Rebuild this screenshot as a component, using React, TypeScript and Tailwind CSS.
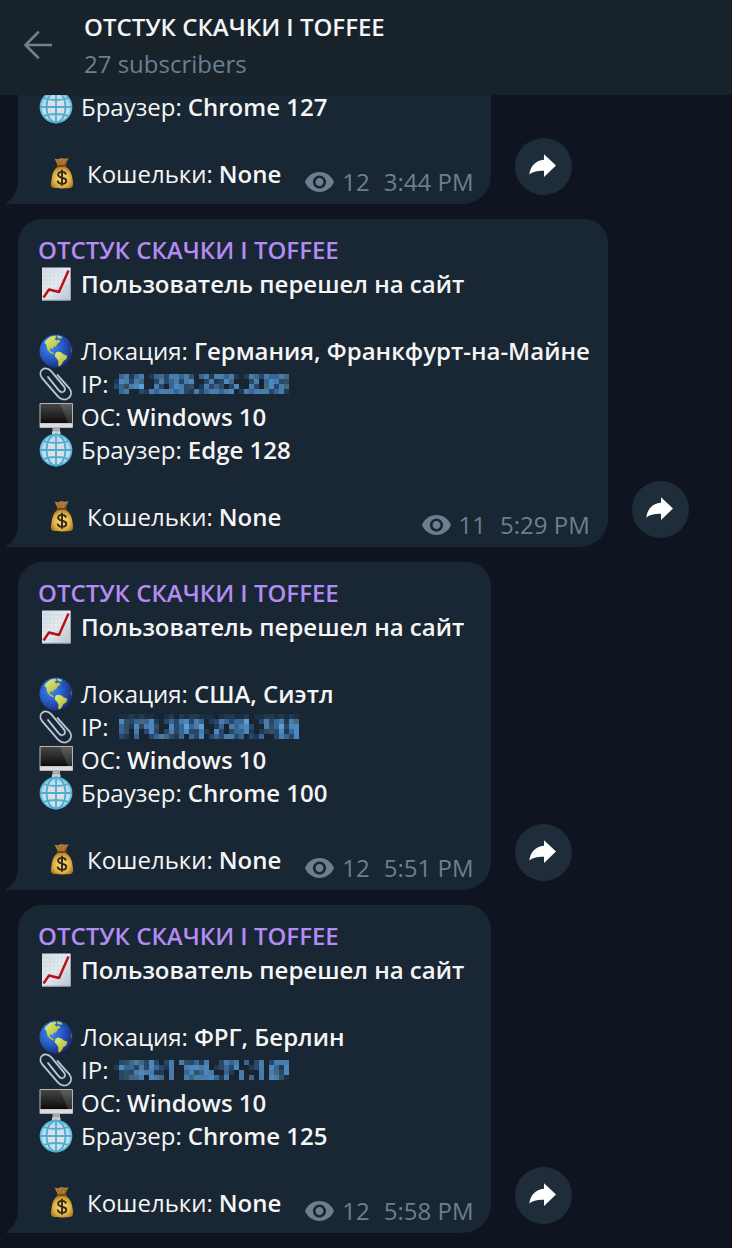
import type { ReactNode } from 'react';

type Message = {
  id: number;
  location?: string;
  ip?: string[];
  browser: string;
  views: number;
  time: string;
};

const CHANNEL = 'ОТСТУК СКАЧКИ I TOFFEE';

// one letter per 5px block
const BLOCKS: Record<string, string> = {
  k: '#182432',
  n: '#1d2e40',
  a: '#203a56',
  b: '#28476a',
  g: '#345060',
  h: '#44697f',
  c: '#386694',
  d: '#4a7ca8',
  e: '#4c88bd',
  f: '#5c9fd8',
};

const messages: Message[] = [
  { id: 1, browser: 'Chrome 127', views: 12, time: '3:44 PM' },
  {
    id: 2,
    location: 'Германия, Франкфурт-на-Майне',
    ip: [
      '.cdacd.achbddcdg.cdaddcda.adhbdccdh',
      'aedbdh.kbdbcdbde.kbdabehk.kbdkcedbg',
      'bcgdef.kdbkcedbg.adbcgkbe.kdbkhebdh',
      '.cd.kbadcdddcdbadbcddcdekadcdddbcda',
    ],
    browser: 'Edge 128',
    views: 11,
    time: '5:29 PM',
  },
  {
    id: 3,
    location: 'США, Сиэтл',
    ip: [
      '.nnanann.knakanaannnknaannaknnaananan',
      '.egbchceakbcbdebdckabdcbccfk.bdbcdadh',
      '.cgaebdegkkebcfcdfkkackdcdebkkdgcfbee',
      '.cgkdkbebkbdbcebbdakebkbcceakabgbeace',
      '.bakckkbcdhbackcbekbcbddbckbackkbdcbe',
    ],
    browser: 'Chrome 100',
    views: 12,
    time: '5:51 PM',
  },
  {
    id: 4,
    location: 'ФРГ, Берлин',
    ip: [
      '.bghdhbebkbdkdgbcadk.bdcdkc.bd.bddd',
      'aeccbdbecbadk.deedekabcbek.abdkecae',
      '.bgbdeddaakdkkcdgcedkkcakdkkkdkdhbe',
      '.bgchdkedhkdkkdcdddecadkkdkhkdkedgn',
    ],
    browser: 'Chrome 125',
    views: 12,
    time: '5:58 PM',
  },
];

function ChartIcon() {
  return (
    <svg viewBox="0 0 36 36" className="size-9 shrink-0" aria-hidden="true">
      <defs>
        <linearGradient id="paper" x1="0" y1="0" x2="1" y2="1">
          <stop offset="0" stopColor="#d3dde5" />
          <stop offset="0.5" stopColor="#e6ecf1" />
          <stop offset="1" stopColor="#b9c5cf" />
        </linearGradient>
      </defs>
      <rect x="4" y="1.5" width="28.5" height="33" fill="url(#paper)" />
      <path
        d="M8 2v32M12 2v32M16 2v32M20 2v32M24 2v32M28 2v32M4 6h28M4 10h28M4 14h28M4 18h28M4 22h28M4 26h28M4 30h28"
        stroke="#b4c6d4"
        strokeWidth="0.5"
        opacity="0.5"
      />
      <path d="M4 34h28.500V2" fill="none" stroke="#9eabb6" strokeWidth="0.8" />
      <path d="M5.500 31.500 11 23.500 21 26 30.500 4.500" fill="none" stroke="#b80f17" strokeWidth="2.400" strokeLinejoin="round" />
    </svg>
  );
}

function EarthIcon() {
  return (
    <svg viewBox="0 0 36 36" className="size-9 shrink-0" aria-hidden="true">
      <defs>
        <radialGradient id="ocean" cx="0.35" cy="0.38" r="0.68">
          <stop offset="0" stopColor="#3f8af0" />
          <stop offset="0.55" stopColor="#2559c4" />
          <stop offset="1" stopColor="#1b2a75" />
        </radialGradient>
        <linearGradient id="land" x1="0" y1="0" x2="1" y2="1">
          <stop offset="0" stopColor="#e3ec78" />
          <stop offset="0.45" stopColor="#c6d556" />
          <stop offset="1" stopColor="#c79a2c" />
        </linearGradient>
      </defs>
      <circle cx="18" cy="18" r="16.5" fill="url(#ocean)" />
      <path
        d="M7.500 7.500 12 3.800l5-1.200 1.500 1.600-2 1.800 2.200 1.400 1.800-1 2.200 1.800-3 2.300-1.700 2.800-2.500.8-.8 2.200-1.900-1.200-1.300 1.300 1.200 2.200 2.300.9 1.600 2-1.800-.3-3.300-2-2.300-3.200-.8-4-1.800-2.200z"
        fill="url(#land)"
      />
      <path d="m19 2.200 4.500 1.200.8 2-3 .1-2.200-1.300z" fill="#a9d070" />
      <path
        d="m17.500 19.800 2.500-1.300 3.500 1 2 1.800 3.800 1.500-.8 3.200-3.200 2.200-1.500 3-2.300 2.200-1.300-1 .2-4.200-1.700-2.700-2-2.300z"
        fill="url(#land)"
      />
      <path d="m33 14 1.200 2.500-.3 3.500-1.500-2.500z" fill="#56663f" />
      <path d="M6.500 10.500q3-5.500 8.500-7" fill="none" stroke="#9be0e8" strokeWidth="1" opacity="0.6" />
    </svg>
  );
}

function ClipIcon() {
  const wire =
    'M10 11 20.500 24C24 28.500 29 25 26 20.500L13.500 5.500C7-1.500-1 5 4 12L20 30.500C27 38 37 30 31.500 22.500L19.500 9';
  return (
    <svg viewBox="0 0 36 36" className="size-9 shrink-0" aria-hidden="true">
      <g fill="none" strokeLinecap="round" strokeLinejoin="round">
        <path d={wire} stroke="#5f7088" strokeWidth="2.3" />
        <path d={wire} stroke="#c8d3e2" strokeWidth="1.2" />
      </g>
    </svg>
  );
}

function MonitorIcon() {
  return (
    <svg viewBox="0 0 36 36" className="size-9 shrink-0" aria-hidden="true">
      <defs>
        <linearGradient id="screen" x1="0" y1="0" x2="0" y2="1">
          <stop offset="0" stopColor="#464646" />
          <stop offset="1" stopColor="#0c0c0c" />
        </linearGradient>
      </defs>
      <path d="M14.500 28h7.500v6h-7.500z" fill="#a9a9ab" />
      <path d="M14 32.500h8.500V35H14z" fill="#d2d2d4" />
      <rect x="1.500" y="4" width="33.500" height="25" rx="1" fill="#b5b5b7" />
      <rect x="2.500" y="5" width="31.500" height="19" fill="url(#screen)" />
      <path d="M22 5h12v19h-4z" fill="#fff" opacity="0.13" />
      <path d="M2 24.500h32.500V28H2z" fill="#dcdcde" />
    </svg>
  );
}

function GlobeIcon() {
  return (
    <svg viewBox="0 0 36 36" className="size-9 shrink-0" aria-hidden="true">
      <defs>
        <radialGradient id="globe" cx="0.5" cy="0.55" r="0.55">
          <stop offset="0" stopColor="#e6e4e2" />
          <stop offset="0.7" stopColor="#cfdde4" />
          <stop offset="1" stopColor="#7fcbe6" />
        </radialGradient>
      </defs>
      <circle cx="18" cy="18" r="15.5" fill="url(#globe)" stroke="#5cbce0" strokeWidth="1.700" />
      <g fill="none" stroke="#4fadd4" strokeWidth="1.800">
        <path d="M18 2v32M2 18h32" />
        <ellipse cx="18" cy="18" rx="9.5" ry="15.5" />
        <path d="M5 9q13 4 26 0M5 27q13-4 26 0" />
      </g>
    </svg>
  );
}

function MoneyBagIcon() {
  return (
    <svg viewBox="0 0 36 36" className="size-9 shrink-0" aria-hidden="true">
      <defs>
        <radialGradient id="bag" cx="0.5" cy="0.55" r="0.6">
          <stop offset="0" stopColor="#f8de7c" />
          <stop offset="0.6" stopColor="#e2b445" />
          <stop offset="1" stopColor="#a36d1b" />
        </radialGradient>
      </defs>
      <path d="M10.500 2.500q3.500 1.500 7-.5 4 1.500 7 0L20.800 10h-6.600z" fill="#b5813a" />
      <path d="m14 4 2.500 5.500M18 3.500v6M22 4l-2 5.500" stroke="#7e5420" strokeWidth="0.8" />
      <path
        d="M14.500 10.500h6.500c4.500 2 7 7 7.500 12.500.4 3 1.500 6-.5 8.200-1.500 1.600-18 1.600-20 0-2-2-.8-5.200-.4-8.200.5-5.500 2.400-10.500 6.900-12.500z"
        fill="url(#bag)"
      />
      <path d="M13.500 10h8.500" stroke="#7a4716" strokeWidth="1.800" strokeLinecap="round" />
      <path
        d="M22 18.500c-.5-1.800-2-2.600-4-2.600-2.300 0-3.900 1.100-3.900 2.900 0 4 8.200 1.900 8.200 5.900 0 1.900-1.700 3-4.200 3s-4.200-1.100-4.500-3.100M18 13.700v16"
        fill="none"
        stroke="#33291c"
        strokeWidth="1.900"
      />
    </svg>
  );
}

function EyeIcon() {
  return (
    <svg viewBox="1 4.5 22 15" className="h-5 w-[29px] shrink-0" fill="currentColor" aria-hidden="true">
      <path d="M12 4.500C7 4.500 2.730 7.610 1 12c1.730 4.390 6 7.500 11 7.500s9.270-3.110 11-7.500c-1.730-4.390-6-7.500-11-7.500zM12 17c-2.760 0-5-2.240-5-5s2.240-5 5-5 5 2.240 5 5-2.240 5-5 5zm0-8c-1.660 0-3 1.340-3 3s1.340 3 3 3 3-1.340 3-3-1.340-3-3-3z" />
    </svg>
  );
}

function Mosaic({ rows }: { rows: string[] }) {
  const width = Math.max(...rows.map((row) => row.length)) * 5;
  const height = rows.length * 5;
  return (
    <svg width={width} height={height} shapeRendering="crispEdges" className="shrink-0" role="img" aria-label="IP">
      {rows.map((row, y) =>
        [...row].map((block, x) =>
          BLOCKS[block] ? <rect key={`${x}-${y}`} x={x * 5} y={y * 5} width="5" height="5" fill={BLOCKS[block]} /> : null,
        ),
      )}
    </svg>
  );
}

function Row({ icon, label, children }: { icon: ReactNode; label?: string; children: ReactNode }) {
  return (
    <div className="flex h-[33px] items-center gap-[7px] whitespace-nowrap">
      {icon}
      <div className="flex items-center gap-1.5">
        {label && <span>{label}</span>}
        {children}
      </div>
    </div>
  );
}

function MessageItem({ message }: { message: Message }) {
  const { location, ip, browser, views, time } = message;
  return (
    <li className="flex items-end gap-6">
      <article
        className={`relative rounded-br-[28px] bg-[#192633] pr-[18px] pb-3.5 pl-5 ${
          location ? 'rounded-t-[24px] pt-3.5' : ''
        }`}
      >
        <svg viewBox="0 0 12 24" className="absolute right-full bottom-0 h-6 w-3" fill="#192633" aria-hidden="true">
          <path d="M12 0v24H1c-1.200 0-1.300-1-.4-1.500C7 18.500 12 12 12 0z" />
        </svg>
        {location && (
          <>
            <h2 className="h-[34px] leading-[34px] font-semibold text-[#b48bf2]">{CHANNEL}</h2>
            <Row icon={<ChartIcon />}>
              <strong className="font-semibold">Пользователь перешел на сайт</strong>
            </Row>
            <div className="h-[34px]" />
            <Row icon={<EarthIcon />} label="Локация:">
              <strong className="font-semibold">{location}</strong>
            </Row>
            <Row icon={<ClipIcon />} label="IP:">
              {ip && <Mosaic rows={ip} />}
            </Row>
            <Row icon={<MonitorIcon />} label="ОС:">
              <strong className="font-semibold">Windows 10</strong>
            </Row>
          </>
        )}
        <Row icon={<GlobeIcon />} label="Браузер:">
          <strong className="font-semibold">{browser}</strong>
        </Row>
        <div className="h-[34px]" />
        <div className="flex h-[33px] items-start justify-between gap-6 pl-1.5">
          <Row icon={<MoneyBagIcon />} label="Кошельки:">
            <strong className="font-semibold">None</strong>
          </Row>
          <div className="flex items-center pt-2 leading-[33px] whitespace-nowrap text-[#6d7f8f]">
            <EyeIcon />
            <span className="ml-2">{views}</span>
            <time className="ml-3.5">{time}</time>
          </div>
        </div>
      </article>
      <button
        type="button"
        aria-label="Forward"
        className="mb-[9px] flex size-[57px] shrink-0 items-center justify-center rounded-full bg-[#1f2c39]"
      >
        <svg viewBox="0 0 57 57" className="size-full" fill="#fff" aria-hidden="true">
          <path d="M29 16.300 41 27.500 29 39v-6.200c-6.500-.3-11 .7-14.700 3.700C15.300 28.500 20 22.500 29 21.700z" />
        </svg>
      </button>
    </li>
  );
}

export default function App() {
  return (
    <div className="min-h-screen overflow-hidden bg-[#0e1520] font-['Open_Sans','Noto_Sans',sans-serif] text-[24px] leading-[33px] text-[#f5f5f5]">
      <header className="relative z-10 flex h-[95px] items-center bg-[#18222b] pb-1.5 pl-6">
        <button type="button" aria-label="Back" className="mr-8 text-[#737f89]">
          <svg viewBox="0 0 28 28" className="size-7" fill="none" stroke="currentColor" strokeWidth="2.6" strokeLinecap="round" strokeLinejoin="round">
            <path d="M27 14H1.500M14 1.500 1.500 14 14 26.500" />
          </svg>
        </button>
        <div className="leading-[37px]">
          <h1 className="font-semibold">{CHANNEL}</h1>
          <p className="text-[#6b7f93]">27 subscribers</p>
        </div>
      </header>
      <main className="-mt-[5px] pb-3.5 pl-[18px]">
        <ul className="flex flex-col gap-[15px]">
          {messages.map((message) => (
            <MessageItem key={message.id} message={message} />
          ))}
        </ul>
      </main>
    </div>
  );
}
